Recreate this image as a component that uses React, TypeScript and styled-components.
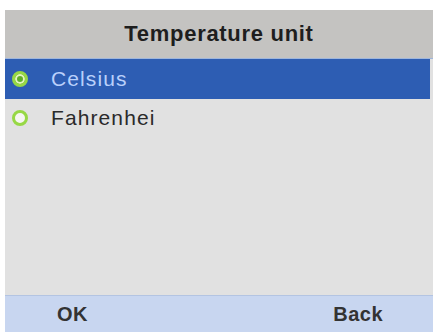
import React from 'react';
import styled, { createGlobalStyle } from 'styled-components';

const GlobalStyle = createGlobalStyle`
	html, body {
		margin: 0;
		padding: 0;
		background: #ffffff;
	}
	body {
		font-family: 'Liberation Sans', Arial, sans-serif;
	}
`;

const units = [
	{ id: 'c', label: 'Celsius' },
	{ id: 'f', label: 'Fahrenhei' },
];

export default function App() {
	const selected = 'c';
	return (
		<>
			<GlobalStyle />
			<Page>
				<Screen>
					<Header>Temperature unit</Header>
					<List>
						{units.map((u) => (
							<Row key={u.id} active={u.id === selected}>
								<Radio active={u.id === selected} />
								<Label active={u.id === selected}>{u.label}</Label>
							</Row>
						))}
					</List>
					<Footer>
						<SoftKey>OK</SoftKey>
						<SoftKey>Back</SoftKey>
					</Footer>
				</Screen>
			</Page>
		</>
	);
}

const Page = styled.div`
	width: 437px;
	height: 332px;
	padding: 10px 4px 0 5px;
	box-sizing: border-box;
	display: flex;
`;

const Screen = styled.div`
	flex: 1;
	display: flex;
	flex-direction: column;
	background: #e1e1e1;
`;

const Header = styled.div`
	height: 48px;
	display: flex;
	align-items: center;
	justify-content: center;
	background: #c4c3c1;
	color: #1e1e1e;
	font-size: 22px;
	font-weight: bold;
	letter-spacing: 0.7px;
	border-bottom: 1px solid #9fb6dc;
`;

const List = styled.div`
	flex: 1;
	display: flex;
	flex-direction: column;
	padding-right: 3px;
`;

const Row = styled.div<{ active?: boolean }>`
	height: ${(p) => (p.active ? '40px' : '38px')};
	display: flex;
	align-items: center;
	gap: 23px;
	padding-left: 7px;
	background: ${(p) => (p.active ? '#2d5db3' : 'transparent')};
`;

const Radio = styled.span<{ active?: boolean }>`
	width: 10px;
	height: 10px;
	border-radius: 50%;
	border: 3px solid #97d845;
	background: ${(p) => (p.active ? '#5fae2a' : '#f6f6f2')};
	box-shadow: ${(p) => (p.active ? 'inset 0 0 0 2px #e4f4c0' : 'none')};
`;

const Label = styled.span<{ active?: boolean }>`
	font-size: 21px;
	letter-spacing: 1.1px;
	color: ${(p) => (p.active ? '#b9d0fb' : '#2a2a2a')};
`;

const Footer = styled.div`
	height: 36px;
	display: flex;
	align-items: center;
	justify-content: space-between;
	padding: 0 50px 0 52px;
	background: #c8d6f0;
	border-top: 1px solid #b3c4e2;
`;

const SoftKey = styled.span`
	font-size: 20px;
	font-weight: bold;
	letter-spacing: 0.5px;
	color: #333;
`;
